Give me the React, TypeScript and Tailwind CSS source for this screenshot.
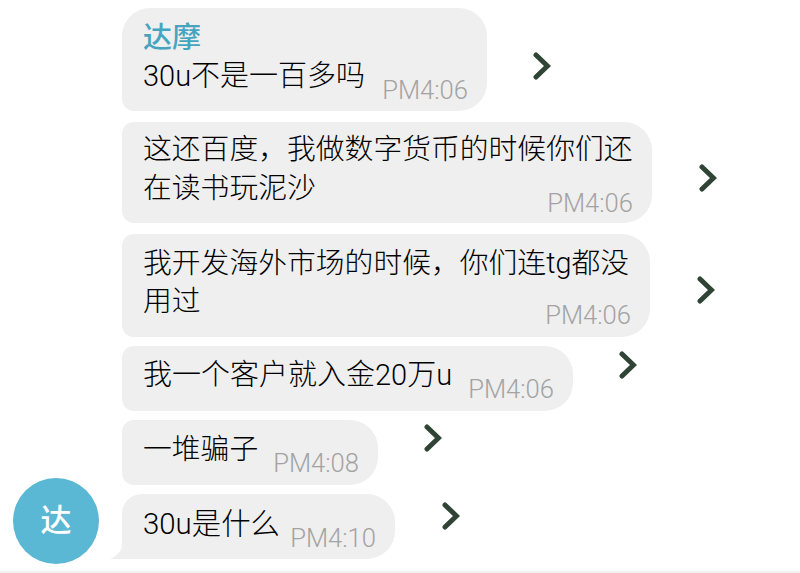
import React from 'react';

const cjk = "font-['Roboto','Noto_Sans_CJK_SC',sans-serif]";

const Chevron = ({ className }: { className: string }) => (
    <svg width="18" height="28" viewBox="0 0 18 28" fill="none" className={className}>
        <path d="M3 3 L14.5 14 L3 25" stroke="#2f4435" strokeWidth="5" strokeLinecap="round" strokeLinejoin="miter" />
    </svg>
);

const Time = ({ value, className }: { value: string; className: string }) => (
    <span className={`text-[25.6px] leading-[30px] font-light text-[#a3a3a3] whitespace-nowrap ${className}`}>{value}</span>
);

export default function App() {
    return (
        <div className={`w-[800px] h-[573px] bg-white overflow-hidden flex flex-col ${cjk}`}>
            <div className="flex flex-col pl-[122px] pt-[8px]">
                <div className="flex items-start">
                    <div className="w-[365px] h-[103px] bg-[#efefef] rounded-[28px] rounded-bl-[12px] pl-[21px] pr-[19px] pt-[11px] text-black">
                        <div className="text-[29px] leading-[38px] font-medium text-[#45a5c0]">达摩</div>
                        <div className="flex justify-between">
                            <span className="text-[29px] leading-[38px] font-light">30u不是一百多吗</span>
                            <Time value="PM4:06" className="mt-[18px]" />
                        </div>
                    </div>
                    <Chevron className="ml-[46px] mt-[44px]" />
                </div>

                <div className="flex items-start mt-[11px]">
                    <div className="w-[530px] h-[101px] bg-[#efefef] rounded-[28px] rounded-l-[12px] pl-[21px] pr-[19px] pt-[7px] text-black">
                        <div className="text-[28.8px] leading-[41px] font-light whitespace-nowrap">这还百度，我做数字货币的时候你们还</div>
                        <div className="flex justify-between">
                            <span className="text-[28.8px] leading-[36px] font-light">在读书玩泥沙</span>
                            <Time value="PM4:06" className="mt-[18px]" />
                        </div>
                    </div>
                    <Chevron className="ml-[47px] mt-[42px]" />
                </div>

                <div className="flex items-start mt-[11px]">
                    <div className="w-[528px] h-[103px] bg-[#efefef] rounded-[28px] rounded-l-[12px] pl-[21px] pr-[19px] pt-[9px] text-black">
                        <div className="text-[28.8px] leading-[40px] font-light whitespace-nowrap">我开发海外市场的时候，你们连tg都没</div>
                        <div className="flex justify-between">
                            <span className="text-[28.8px] leading-[36px] font-light">用过</span>
                            <Time value="PM4:06" className="mt-[17px]" />
                        </div>
                    </div>
                    <Chevron className="ml-[47px] mt-[42px]" />
                </div>

                <div className="flex items-start mt-[9px]">
                    <div className="w-[451px] h-[65px] bg-[#efefef] rounded-[28px] rounded-l-[12px] pl-[21px] pr-[19px] pt-[10px] flex justify-between text-black">
                        <span className="text-[29px] leading-[38px] font-light whitespace-nowrap">我一个客户就入金20万u</span>
                        <Time value="PM4:06" className="mt-[18px]" />
                    </div>
                    <Chevron className="ml-[46px] mt-[5px]" />
                </div>

                <div className="flex items-start mt-[9px]">
                    <div className="w-[256px] h-[65px] bg-[#efefef] rounded-[28px] rounded-l-[12px] pl-[21px] pr-[19px] pt-[10px] flex justify-between text-black">
                        <span className="text-[28.8px] leading-[38px] font-light whitespace-nowrap">一堆骗子</span>
                        <Time value="PM4:08" className="mt-[18px]" />
                    </div>
                    <Chevron className="ml-[46px] mt-[4px]" />
                </div>
            </div>

            <div className="flex items-start pl-[13px] -mt-[7px]">
                <div className="w-[86px] h-[86px] rounded-full bg-[#5ab8d4] flex items-center justify-center text-white text-[31px] font-medium z-10 shrink-0">达</div>
                <div className="relative ml-[23px] mt-[16px] w-[273px] h-[65px] bg-[#efefef] rounded-[28px] rounded-tl-[20px] rounded-bl-none pl-[21px] pr-[19px] pt-[11px] flex justify-between text-black">
                    <svg width="14" height="24" viewBox="0 0 14 24" className="absolute -left-[12px] bottom-0">
                        <path d="M14 0 C14 12 9 21 0 24 L14 24 Z" fill="#efefef" />
                    </svg>
                    <span className="text-[29.4px] leading-[38px] font-light whitespace-nowrap">30u是什么</span>
                    <Time value="PM4:10" className="mt-[18px]" />
                </div>
                <Chevron className="ml-[47px] mt-[24px]" />
            </div>

            <div className="mt-auto h-[2px] bg-[#f1f1f1]" />
        </div>
    );
}
